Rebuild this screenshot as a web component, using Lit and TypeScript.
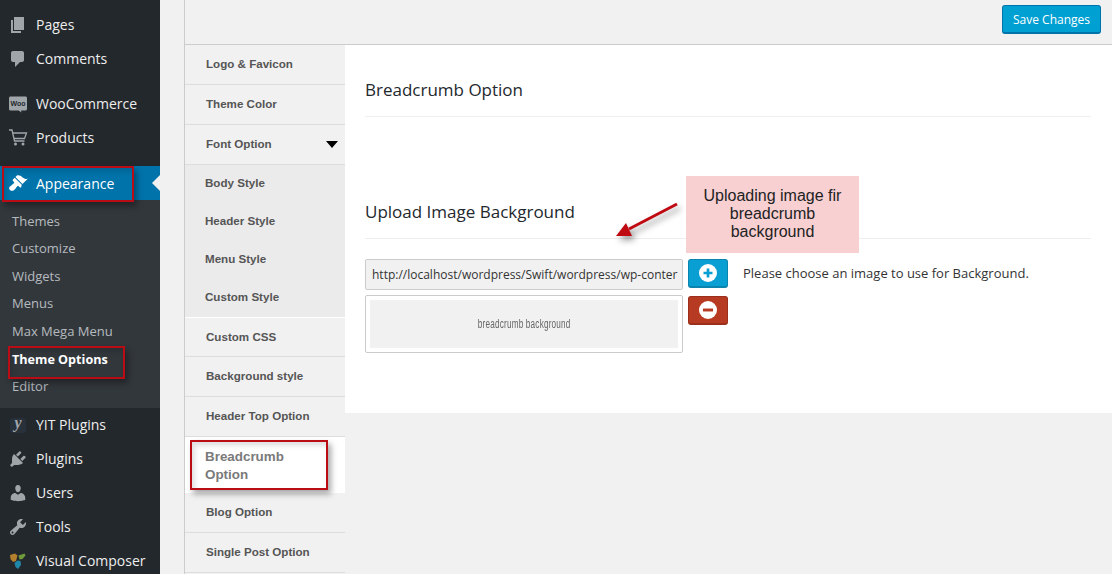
import { LitElement, html, css, svg } from 'lit';
import { customElement } from 'lit/decorators.js';

const icons: Record<string, unknown> = {
  pages: svg`<path d="M6 15V2h10v13H6zm-1 1h8v2H3V5h2v11z"/>`,
  comments: svg`<path d="M5 2h9c1.1 0 2 .9 2 2v7c0 1.1-.9 2-2 2h-2l-5 5v-5H5c-1.1 0-2-.9-2-2V4c0-1.1.9-2 2-2z"/>`,
  woo: svg`<path d="M2.5 2.5h15c.8 0 1.5.7 1.5 1.5v11c0 .8-.7 1.5-1.5 1.5H13l.5 2-3-2h-8c-.8 0-1.5-.7-1.5-1.5V4c0-.8.7-1.5 1.5-1.5z"/><text x="10" y="12" text-anchor="middle" font-family="Liberation Sans, sans-serif" font-size="7" font-weight="700" fill="#23282d">Woo</text>`,
  cart: svg`<path d="M1 2h3l2.5 11h10M5 5h13.5l-2 5.5H6.2" fill="none" stroke="currentColor" stroke-width="1.3"/><circle cx="7.5" cy="16" r="1.5"/><circle cx="15" cy="16" r="1.5"/>`,
  brush: svg`<path d="M14.48 11.06L7.41 3.99l1.5-1.5c.5-.56 2.3-.47 3.51.32 1.21.8 1.43 1.28 2.91 2.1 1.18.64 2.45 1.26 4.45.85zm-.71.71L6.7 4.7 4.93 6.47c-.39.39-.39 1.02 0 1.41l1.06 1.06c.39.39.39 1.03 0 1.42-.6.6-1.43 1.11-2.21 1.69-.35.26-.7.53-1.01.84C1.43 13.23.4 15.24 2 17c1.6 1.6 3.6.57 4.74-.57.31-.31.58-.66.84-1.01.58-.78 1.09-1.61 1.69-2.21.39-.39 1.02-.39 1.41 0l1.06 1.06c.39.39 1.02.39 1.41 0z"/>`,
  yit: svg`<rect x="2" y="3" width="16" height="15" rx="3" fill="#28303a"/><text x="10" y="13" text-anchor="middle" font-family="Liberation Serif, serif" font-size="16" font-weight="700" font-style="italic">y</text>`,
  plugins: svg`<path d="M13.11 4.36L9.87 7.6 8 5.73l3.24-3.24c.35-.34 1.05-.2 1.56.32.52.51.66 1.21.31 1.55zm-8 1.77l.91-1.12 9.01 9.01-1.19.84c-.71.71-2.63 1.16-3.82 1.16H6.14L4.9 17.26c-.59.59-1.54.59-2.12 0-.59-.58-.59-1.53 0-2.12l1.24-1.24v-3.88c0-1.13.4-3.19 1.09-3.89zm7.26 3.97l3.24-3.24c.34-.35 1.04-.21 1.55.31.52.51.66 1.21.31 1.55l-3.24 3.25z"/>`,
  users: svg`<path d="M10 9.25c-2.27 0-2.73-3.44-2.73-3.44C7 4.02 7.82 2 9.97 2c2.16 0 2.98 2.02 2.71 3.81 0 0-.41 3.44-2.68 3.44zm0 2.57L12.72 10c2.39 0 4.52 2.33 4.52 4.53v2.49s-3.65 1.13-7.24 1.13c-3.65 0-7.24-1.13-7.24-1.13v-2.49c0-2.25 1.94-4.48 4.47-4.48z"/>`,
  tools: svg`<path d="M16.68 9.77c-1.34 1.34-3.3 1.67-4.95.99l-5.41 6.52c-.99.99-2.59.99-3.58 0s-.99-2.59 0-3.57l6.52-5.42c-.68-1.65-.35-3.61.99-4.95 1.28-1.28 3.12-1.62 4.72-1.06l-2.89 2.89 2.82 2.82 2.86-2.87c.53 1.58.18 3.39-1.08 4.67zM3.81 16.21c.4.39 1.04.39 1.43 0 .4-.4.4-1.04 0-1.43-.39-.4-1.03-.4-1.43 0-.39.39-.39 1.03 0 1.43z"/>`,
  vc: svg`<path d="M2 4l5-1.5 2.5 2L8 10 5 11 2.5 8z" fill="#b5802d"/><path d="M10.5 4.5l6-2 1 2-3 3.5-3 .5z" fill="#6f9a3c"/><path d="M6.5 12l3-2.5 3 .5.5 4-3 4-2.5-2z" fill="#1f87a8"/>`,
};

const group1 = [
  { label: 'Pages', icon: 'pages' },
  { label: 'Comments', icon: 'comments' },
];
const group2 = [
  { label: 'WooCommerce', icon: 'woo' },
  { label: 'Products', icon: 'cart' },
];
const group3 = [
  { label: 'YIT Plugins', icon: 'yit' },
  { label: 'Plugins', icon: 'plugins' },
  { label: 'Users', icon: 'users' },
  { label: 'Tools', icon: 'tools' },
  { label: 'Visual Composer', icon: 'vc' },
];
const submenu = ['Themes', 'Customize', 'Widgets', 'Menus', 'Max Mega Menu', 'Theme Options', 'Editor'];
const fontSub = ['Body Style', 'Header Style', 'Menu Style', 'Custom Style'];

@customElement('app-root')
export class AppRoot extends LitElement {
  static styles = css`
    :host {
      display: block;
      position: relative;
      width: 1112px;
      height: 574px;
      overflow: hidden;
      background: #f1f1f1;
      font-family: "Open Sans", sans-serif;
    }
    .layout { display: flex; height: 574px; }

    .sidebar { width: 160px; flex: none; background: #23282d; padding-top: 8px; overflow: hidden; }
    .group { margin-bottom: 11px; }
    .nav {
      display: flex;
      align-items: center;
      height: 34px;
      padding-left: 8px;
      gap: 8px;
      color: #eee;
      font-size: 14px;
      position: relative;
    }
    .nav span { margin-bottom: 2px; }
    .nav svg { width: 20px; height: 20px; flex: none; fill: #a0a5aa; color: #a0a5aa; }
    .nav.active { background: #0073aa; color: #fff; }
    .nav.active span { margin-bottom: 0; }
    .nav.active svg { fill: #fff; }
    .nav.active::after {
      content: "";
      position: absolute;
      right: 0;
      top: 9px;
      border: 8px solid transparent;
      border-right-color: #f1f1f1;
      border-left-width: 0;
    }
    .sub { background: #32373c; padding: 7.5px 0 8px; margin-bottom: 0; }
    .sub div {
      height: 27.5px;
      line-height: 27.5px;
      padding-left: 12px;
      font-size: 13px;
      color: rgba(240, 245, 250, 0.7);
    }
    .sub div.current { color: #fff; font-weight: 700; font-size: 12.6px; line-height: 29px; }

    .main { flex: 1; margin-left: 24px; border-left: 1px solid #ccc; min-width: 0; }
    .topbar {
      border-bottom: 1px solid #ccc;
      background: #f1f1f1;
      display: flex;
      justify-content: flex-end;
      padding: 5px 11px 0 0;
      height: 39px;
    }
    .save {
      width: 99px;
      height: 29px;
      box-sizing: border-box;
      background: #00a0d2;
      border: 1px solid #0073aa;
      border-bottom-width: 2px;
      border-radius: 3px;
      color: #fff;
      font-size: 12px;
      display: flex;
      align-items: center;
      justify-content: center;
    }
    .body { display: flex; align-items: flex-start; }

    .tabs { width: 160px; flex: none; font-family: "Liberation Sans", sans-serif; font-weight: 700; font-size: 11.6px; color: #555; }
    .tab {
      height: 37px;
      padding: 0 0 2px 21px;
      border-bottom: 1px solid #ddd;
      display: flex;
      align-items: center;
      background: #f1f1f1;
      position: relative;
    }
    .tab.caret::after {
      content: "";
      position: absolute;
      right: 7px;
      top: 16px;
      border: 6px solid transparent;
      border-top: 7px solid #000;
      border-bottom-width: 0;
    }
    .tab.first-after { border-top: 1px solid #fff; height: 36px; }
    .subtabs { background: #ebebeb; }
    .subtabs div { height: 38px; line-height: 36px; padding-left: 20px; }
    .tab.selected {
      height: 55px;
      background: #fff;
      color: #7a7a7a;
      font-size: 13.4px;
      line-height: 18px;
      padding: 1px 0 0 20px;
      border-bottom: none;
    }

    .panel { flex: 1; background: #fff; height: 368px; padding: 0 21px 0 20px; color: #333; }
    .heading {
      font-size: 17px;
      line-height: 24px;
      color: #23282d;
      border-bottom: 1px solid #eee;
    }
    .h1 { padding: 33px 0 14px; }
    .h2 { padding: 83px 0 14px; margin-bottom: 20px; }
    .upload { display: flex; align-items: flex-start; gap: 5px; }
    .fields { width: 318px; display: flex; flex-direction: column; gap: 5px; }
    .url {
      height: 31px;
      box-sizing: border-box;
      border: 1px solid #ccc;
      border-radius: 2px;
      background: #f1f1f1;
      font-size: 12px;
      line-height: 29px;
      padding: 0 5px 0 6px;
      color: #333;
      white-space: nowrap;
    }
    .preview {
      height: 58px;
      box-sizing: border-box;
      border: 1px solid #ccc;
      border-radius: 2px;
      padding: 4px;
      background: #fff;
    }
    .preview div {
      height: 100%;
      background: #f1f1f1;
      display: flex;
      align-items: center;
      justify-content: center;
      font-family: "Liberation Sans", sans-serif;
      font-size: 12px;
      color: #666;
    }
    .preview span { display: inline-block; transform: scaleX(0.68); letter-spacing: 0.3px; white-space: nowrap; }
    .buttons { display: flex; flex-direction: column; gap: 8px; }
    .btn {
      width: 40px;
      height: 29px;
      box-sizing: border-box;
      border-radius: 3px;
      display: flex;
      align-items: center;
      justify-content: center;
    }
    .btn svg { width: 18px; height: 18px; }
    .btn.add { background: #0a9fd2; border: 1px solid #0c84b0; border-bottom-width: 2px; }
    .btn.remove { background: #b73a22; border: 1px solid #9c2f1b; border-bottom-width: 2px; }
    .hint { font-size: 13px; color: #333; margin: 5px 0 0 10px; line-height: 18px; }

    .mark {
      position: absolute;
      border: 2px solid #b90c14;
      box-sizing: border-box;
      box-shadow: 3px 4px 6px rgba(0, 0, 0, 0.35), inset 3px 4px 5px rgba(0, 0, 0, 0.12);
    }
    .mark.m1 { left: 2px; top: 166px; width: 132px; height: 36px; }
    .mark.m2 { left: 8px; top: 346px; width: 117px; height: 33px; }
    .mark.m3 { left: 190px; top: 440px; width: 138px; height: 50px; }
    .note {
      position: absolute;
      left: 686px;
      top: 176px;
      width: 173px;
      height: 77px;
      box-sizing: border-box;
      padding: 11px 12px 0;
      background: #f8d0d2;
      color: #222;
      font-family: "Liberation Sans", sans-serif;
      font-size: 16px;
      line-height: 18px;
      text-align: center;
    }
    .arrow {
      position: absolute;
      left: 610px;
      top: 198px;
      width: 76px;
      height: 48px;
      overflow: visible;
      filter: drop-shadow(3px 4px 3px rgba(0, 0, 0, 0.4));
    }
  `;

  private navRow(item: { label: string; icon: string }) {
    return html`<div class="nav"><svg viewBox="0 0 20 20">${icons[item.icon]}</svg><span>${item.label}</span></div>`;
  }

  render() {
    return html`
      <div class="layout">
        <aside class="sidebar">
          <div class="group">${group1.map((i) => this.navRow(i))}</div>
          <div class="group">${group2.map((i) => this.navRow(i))}</div>
          <div class="nav active"><svg viewBox="0 0 20 20">${icons.brush}</svg><span>Appearance</span></div>
          <div class="sub">
            ${submenu.map((s) => html`<div class=${s === 'Theme Options' ? 'current' : ''}>${s}</div>`)}
          </div>
          <div>${group3.map((i) => this.navRow(i))}</div>
        </aside>
        <div class="main">
          <div class="topbar"><div class="save">Save Changes</div></div>
          <div class="body">
            <nav class="tabs">
              <div class="tab">Logo &amp; Favicon</div>
              <div class="tab">Theme Color</div>
              <div class="tab caret">Font Option</div>
              <div class="subtabs">${fontSub.map((s) => html`<div>${s}</div>`)}</div>
              <div class="tab first-after">Custom CSS</div>
              <div class="tab">Background style</div>
              <div class="tab">Header Top Option</div>
              <div class="tab selected">Breadcrumb<br />Option</div>
              <div class="tab">Blog Option</div>
              <div class="tab">Single Post Option</div>
            </nav>
            <section class="panel">
              <div class="heading h1">Breadcrumb Option</div>
              <div class="heading h2">Upload Image Background</div>
              <div class="upload">
                <div class="fields">
                  <div class="url">http://localhost/wordpress/Swift/wordpress/wp-conter</div>
                  <div class="preview"><div><span>breadcrumb background</span></div></div>
                </div>
                <div class="buttons">
                  <div class="btn add">
                    <svg viewBox="0 0 16 16"><circle cx="8" cy="8" r="8" fill="#fff" /><path d="M8 4v8M4 8h8" stroke="#0a9fd2" stroke-width="2.4" /></svg>
                  </div>
                  <div class="btn remove">
                    <svg viewBox="0 0 16 16"><circle cx="8" cy="8" r="8" fill="#fff" /><path d="M3.5 8h9" stroke="#b73a22" stroke-width="2.6" /></svg>
                  </div>
                </div>
                <div class="hint">Please choose an image to use for Background.</div>
              </div>
            </section>
          </div>
        </div>
      </div>

      <div class="mark m1"></div>
      <div class="mark m2"></div>
      <div class="mark m3"></div>
      <div class="note">Uploading image fir breadcrumb background</div>
      <svg class="arrow" viewBox="0 0 76 48">
        <path d="M67 6L19 31" stroke="#c00a12" stroke-width="3" fill="none" />
        <path d="M6 38L16 25L22 38z" fill="#c00a12" />
      </svg>
    `;
  }
}
